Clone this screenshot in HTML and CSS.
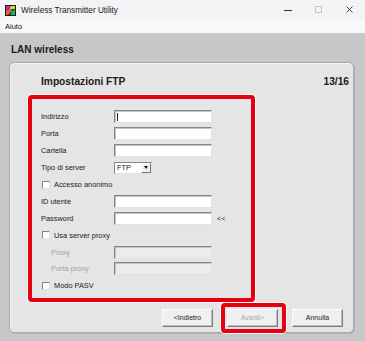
FILE: index.html
```html
<!DOCTYPE html>
<html>
<head>
  <title>Wireless Transmitter Utility</title>
  <link rel="stylesheet" href="styles.css">
</head>
<body>
<div class="window">
    <!-- Title bar -->
    <div class="titlebar">
        <svg class="app-icon" width="11" height="11" viewBox="0 0 11 11">
            <rect width="11" height="11" fill="#1a1a1a"/>
            <polygon points="1,1 6,1 1,6" fill="#e8208a"/>
            <polygon points="6,1 10,1 10,4 4,4" fill="#f4d312"/>
            <polygon points="1,6 5,3 7,6 3,10 1,10" fill="#ff5a1f"/>
            <polygon points="7,6 10,4 10,10 5,10" fill="#22b14c"/>
            <polygon points="4,4 7,4 7,6 5,7" fill="#2f8bff"/>
        </svg>
        <span class="title">Wireless Transmitter Utility</span>
        <div class="controls">
            <span class="ctl ctl-min"></span>
            <span class="ctl ctl-max"></span>
            <svg class="ctl-close" width="7" height="7" viewBox="0 0 7 7">
                <path d="M0.5 0.5 L6.5 6.5 M6.5 0.5 L0.5 6.5" stroke="#333" stroke-width="0.9"/>
            </svg>
        </div>
    </div>

    <!-- Menu -->
    <div class="menubar"><span>Aiuto</span></div>

    <!-- Client area -->
    <div class="client">
        <div class="section-title">LAN wireless</div>

        <div class="panel">
            <div class="panel-head">
                <span>Impostazioni FTP</span>
                <span>13/16</span>
            </div>

            <div class="form-box">
                <div class="row">
                    <span class="label">Indirizzo</span>
                    <div class="field"><span class="caret"></span></div>
                </div>
                <div class="row">
                    <span class="label">Porta</span>
                    <div class="field"></div>
                </div>
                <div class="row">
                    <span class="label">Cartella</span>
                    <div class="field"></div>
                </div>
                <div class="row">
                    <span class="label">Tipo di server</span>
                    <div class="select">
                        <span class="select-value">FTP</span>
                        <span class="select-btn"><span class="arrow"></span></span>
                    </div>
                </div>
                <div class="row check-row">
                    <span class="checkbox"></span>
                    <span>Accesso anonimo</span>
                </div>
                <div class="row">
                    <span class="label">ID utente</span>
                    <div class="field"></div>
                </div>
                <div class="row">
                    <span class="label">Password</span>
                    <div class="field"></div>
                    <span class="reveal">&lt;&lt;</span>
                </div>
                <div class="row check-row">
                    <span class="checkbox"></span>
                    <span>Usa server proxy</span>
                </div>
                <div class="row disabled">
                    <span class="label">Proxy</span>
                    <div class="field"></div>
                </div>
                <div class="row disabled">
                    <span class="label">Porta proxy</span>
                    <div class="field"></div>
                </div>
                <div class="row check-row">
                    <span class="checkbox"></span>
                    <span>Modo PASV</span>
                </div>
            </div>

            <div class="buttons">
                <div class="btn">&lt;Indietro</div>
                <div class="btn btn-disabled highlight">Avanti&gt;</div>
                <div class="btn">Annulla</div>
            </div>
        </div>
    </div>
</div>
</body>
</html>
```

FILE: styles.css
```css
/* General */
body {
    margin: 0;
    font-family: "Liberation Sans", Arial, sans-serif;
    color: #111;
}

.window {
    width: 365px;
    height: 341px;
    display: flex;
    flex-direction: column;
    background-color: #c7c7c7;
    overflow: hidden;
}

/* Title bar */
.titlebar {
    height: 20px;
    display: flex;
    align-items: center;
    padding-left: 5px;
    background-color: #f2f3f5;
}

.app-icon {
    display: block;
}

.title {
    margin-left: 5px;
    font-size: 8.2px;
    color: #1a1a1a;
}

.controls {
    margin-left: auto;
    display: flex;
    align-items: center;
    height: 20px;
}

.ctl-min {
    width: 8px;
    height: 1px;
    background-color: #333;
    margin-right: 23px;
}

.ctl-max {
    width: 5px;
    height: 5px;
    border: 1px solid #c4c4c4;
    margin-right: 24px;
    margin-top: -1px;
}

.ctl-close {
    display: block;
    margin-right: 12px;
    margin-top: -1px;
}

/* Menu */
.menubar {
    height: 13px;
    padding-left: 5px;
    font-size: 7.5px;
    line-height: 13px;
    background-color: #f8f8f8;
}

/* Client */
.client {
    flex: 1;
    padding: 0 11px 8px 9px;
    display: flex;
    flex-direction: column;
}

.section-title {
    height: 29px;
    box-sizing: border-box;
    padding: 11px 0 0 2px;
    font-size: 10px;
    line-height: 12px;
    font-weight: bold;
    color: #1a1a1a;
}

.panel {
    flex: 1;
    background-color: #e5e5e5;
    border: 1px solid #a9a9a9;
    border-radius: 5px;
    box-shadow: inset 1px 1px 0 #f3f3f3, 1px 1px 0 #b3b3b3;
    display: flex;
    flex-direction: column;
    padding: 0 10px 5px 18px;
}

.panel-head {
    height: 32px;
    box-sizing: border-box;
    padding: 12px 0 0 13px;
    margin-right: -6px;
    display: flex;
    justify-content: space-between;
    font-size: 10.2px;
    line-height: 13px;
    font-weight: bold;
    color: #1a1a1a;
}

/* Form box */
.form-box {
    width: 227px;
    height: 207px;
    box-sizing: border-box;
    border: 4px solid #e50012;
    border-radius: 4px;
    box-shadow: 0 0 0 1px #fafafa;
    padding: 9.5px 0 0 9px;
}

.row {
    height: 16.9px;
    display: flex;
    align-items: center;
    font-size: 7.4px;
    color: #1a1a1a;
}

.label {
    width: 73px;
    flex-shrink: 0;
}

.row.disabled .label {
    padding-left: 10px;
    width: 63px;
    color: #a3a3a3;
}

.field {
    width: 98px;
    height: 13px;
    box-sizing: border-box;
    background-color: #fff;
    border: 1px solid;
    border-color: #858585 #e2e2e2 #e2e2e2 #858585;
    box-shadow: inset 1px 1px 0 #c4c4c4;
    position: relative;
}

.row.disabled .field {
    background-color: #ececec;
}

.caret {
    position: absolute;
    left: 2px;
    top: 2px;
    width: 1px;
    height: 8px;
    background-color: #222;
}

.reveal {
    margin-left: 5px;
    font-size: 7px;
    letter-spacing: 0.5px;
}

.select {
    width: 38px;
    height: 12px;
    box-sizing: border-box;
    background-color: #fff;
    border: 1px solid;
    border-color: #858585 #e2e2e2 #e2e2e2 #858585;
    display: flex;
    align-items: center;
}

.select-value {
    flex: 1;
    padding-left: 2px;
}

.select-btn {
    width: 10px;
    height: 10px;
    box-sizing: border-box;
    background-color: #efefef;
    border: 1px solid;
    border-color: #fff #777 #777 #fff;
    display: flex;
    align-items: center;
    justify-content: center;
}

.arrow {
    width: 0;
    height: 0;
    border-left: 2.5px solid transparent;
    border-right: 2.5px solid transparent;
    border-top: 3px solid #111;
}

.check-row {
    padding-left: 1px;
}

.checkbox {
    width: 8px;
    height: 8px;
    box-sizing: border-box;
    background-color: #fff;
    border: 1px solid;
    border-color: #858585 #e2e2e2 #e2e2e2 #858585;
    margin-right: 4px;
}

/* Buttons */
.buttons {
    margin-top: auto;
    display: flex;
    justify-content: flex-end;
    gap: 14px;
}

.btn {
    width: 51px;
    height: 18px;
    box-sizing: border-box;
    background-color: #f0f0f0;
    border: 1px solid;
    border-color: #fdfdfd #7c7c7c #7c7c7c #fdfdfd;
    box-shadow: inset -1px -1px 0 #bcbcbc;
    font-size: 7px;
    line-height: 16px;
    text-align: center;
    color: #1a1a1a;
}

.btn-disabled {
    color: #a6a6a6;
}

.highlight {
    position: relative;
}

.highlight::after {
    content: "";
    position: absolute;
    top: -7px;
    left: -7px;
    right: -9px;
    bottom: -7px;
    border: 4px solid #e50012;
    border-radius: 4px;
    box-shadow: 0 0 0 1px #fafafa;
}
```
